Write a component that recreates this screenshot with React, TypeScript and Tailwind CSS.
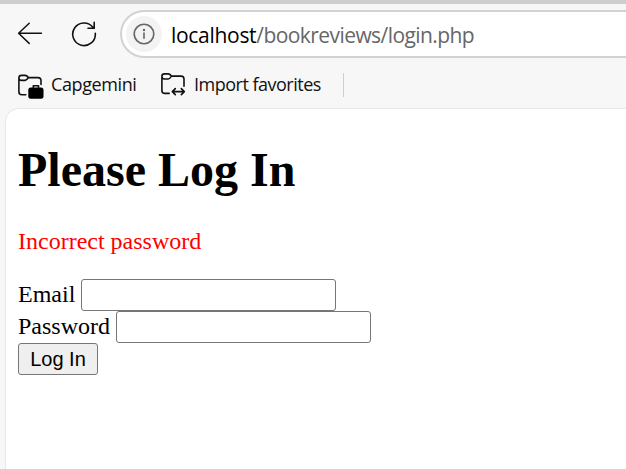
import { ReactNode } from "react";

function BackIcon() {
  return (
    <svg width="26" height="24" viewBox="0 0 26 24" fill="none" stroke="#111" strokeWidth="1.5" strokeLinecap="round" strokeLinejoin="round">
      <path d="M24.4 11.3H1.6M12.2 1.2L1.6 11.3L12.2 21.4" />
    </svg>
  );
}

function ReloadIcon() {
  return (
    <svg width="26" height="26" viewBox="0 0 26 26" fill="none" stroke="#111" strokeWidth="1.6" strokeLinecap="round" strokeLinejoin="round">
      <path d="M24.3 12.4A11.3 11.3 0 1 1 22 6.4L23.2 7.3M23.2 1.4V7.3H17" />
    </svg>
  );
}

function InfoIcon() {
  return (
    <svg width="22" height="22" viewBox="0 0 22 22" fill="none" stroke="#666" strokeWidth="1.6" strokeLinecap="round">
      <circle cx="11" cy="11" r="9.8" />
      <path d="M11 10V15.2" />
      <circle cx="11" cy="7" r="1.2" fill="#666" stroke="none" />
    </svg>
  );
}

function WorkFolderIcon() {
  return (
    <svg width="28" height="28" viewBox="0 0 28 28" fill="none" stroke="#111" strokeWidth="1.6" strokeLinecap="round" strokeLinejoin="round">
      <path d="M8.8 23.8H4.8Q1.9 23.8 1.9 20.8V7Q1.9 4.4 4.5 4.4H8.2Q9.5 4.4 11.6 6.6H21Q24 6.6 24 9.6V13.5M1.9 7Q1.9 9.4 4.5 9.4H8.2Q9.5 9.4 11.6 6.6" />
      <rect x="11.3" y="16.5" width="15.2" height="11.3" rx="2.5" fill="#000" stroke="none" />
      <path d="M16.3 16.5V14.8H21.5V16.5" />
    </svg>
  );
}

function ImportFolderIcon() {
  return (
    <svg width="28" height="28" viewBox="0 0 28 28" fill="none" stroke="#111" strokeWidth="1.6" strokeLinecap="round" strokeLinejoin="round">
      <path d="M9.2 22.4H4.8Q1.9 22.4 1.9 19.4V5.3Q1.9 2.9 4.5 2.9H8.2Q9.5 2.9 11.6 5.1H21Q24 5.1 24 8.1V15.2M1.9 5.5Q1.9 8 4.5 8H8.2Q9.5 8 11.6 5.1" />
      <path d="M12.6 20.6H24M15.3 17.6L12.3 20.6L15.3 23.6M21.3 17.6L24.3 20.6L21.3 23.6" />
    </svg>
  );
}

function Favorite({ icon, children }: { icon: ReactNode; children: ReactNode }) {
  return (
    <div className="flex h-7 items-center gap-[6px] whitespace-nowrap">
      {icon}
      {children}
    </div>
  );
}

export default function App() {
  return (
    <div className="flex h-[469px] w-[626px] flex-col overflow-hidden bg-[#f7f7f7] text-black">
      <div className="h-1 shrink-0 bg-[#cdcdcd]" />
      <header className="flex h-[104px] shrink-0 flex-col pt-[6px] font-['Open_Sans','Noto_Sans',sans-serif]">
        <div className="flex h-12 items-center">
          <div className="ml-[17px] flex w-[54px] items-center"><BackIcon /></div>
          <div className="flex w-[49px] items-center"><ReloadIcon /></div>
          <div className="flex h-12 flex-1 items-center rounded-l-full border-2 border-r-0 border-[#d2d2d2] bg-white pl-[4px]">
            <div className="flex size-9 items-center justify-center rounded-full bg-[#f3f3f3]"><InfoIcon /></div>
            <div className="ml-[9px] pt-px text-[21px] leading-7 tracking-[-0.57px] whitespace-nowrap text-[#666]">
              <span className="tracking-[-0.3px] text-black">localhost</span>/bookreviews/login.php
            </div>
          </div>
        </div>
        <div className="flex items-center pt-[13px] pl-[17px] text-[18px] leading-7 text-[#111]">
          <div className="w-[143px]">
            <Favorite icon={<WorkFolderIcon />}><span className="pb-0.5 tracking-[-0.4px]">Capgemini</span></Favorite>
          </div>
          <div className="w-[183px]">
            <Favorite icon={<ImportFolderIcon />}><span className="pb-0.5 tracking-[-0.5px]">Import favorites</span></Favorite>
          </div>
          <div className="h-6 w-px bg-[#cfcfcf]" />
        </div>
      </header>
      <main className="ml-[5px] flex-1 rounded-tl-[14px] border-t border-l border-[#e8e8e8] bg-white pt-[33px] pl-3 font-['Liberation_Serif',serif] text-[24px] leading-[27px]">
        <h1 className="text-[48px] leading-[55px] font-bold">Please Log In</h1>
        <p className="mt-[31px] text-[#ff0000]">Incorrect password</p>
        <form className="mt-6">
          <label className="flex h-8 items-center gap-[6px]">
            <span className="pb-0.5">Email</span>
            <input type="email" className="h-8 w-[255px] rounded-[3px] border border-[#767676] bg-white px-1 outline-none" />
          </label>
          <label className="flex h-8 items-center gap-[6px]">
            <span className="pb-0.5">Password</span>
            <input type="password" className="h-8 w-[255px] rounded-[3px] border border-[#767676] bg-white px-1 outline-none" />
          </label>
          <button type="button" className="flex h-8 w-20 items-center justify-center rounded-[3px] border border-[#767676] bg-[#efefef] font-['Liberation_Sans',sans-serif] text-[20px]">Log In</button>
        </form>
      </main>
    </div>
  );
}
